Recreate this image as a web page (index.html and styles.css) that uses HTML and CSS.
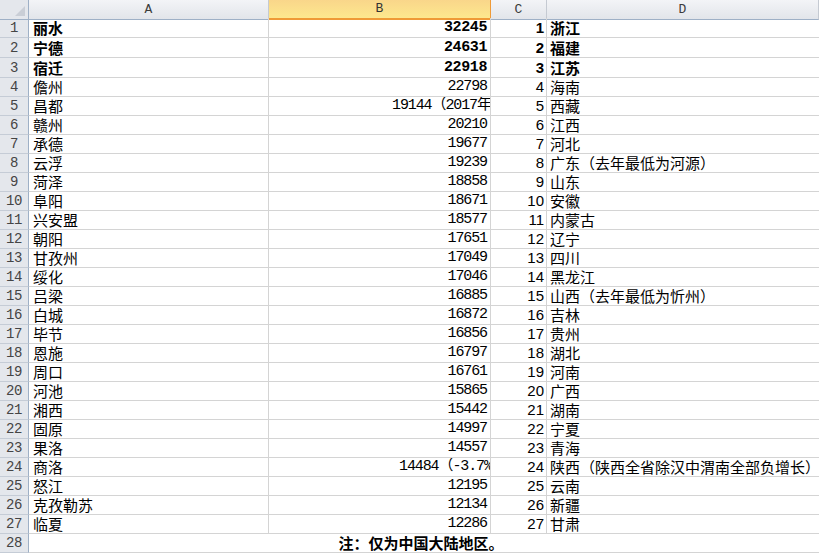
FILE: index.html
```html
<!DOCTYPE html>
<html>
<head>
<meta charset="utf-8">
<link rel="stylesheet" href="styles.css">
</head>
<body>
<div class="sheet">
  <div class="row head">
    <div class="corner"><span class="tri"></span></div>
    <div class="ch">A</div>
    <div class="ch sel">B</div>
    <div class="ch">C</div>
    <div class="ch">D</div>
  </div>
  <div class="row b"><div class="rh">1</div><div class="a">丽水</div><div class="n">32245</div><div class="r">1</div><div class="d">浙江</div></div>
  <div class="row b"><div class="rh">2</div><div class="a">宁德</div><div class="n">24631</div><div class="r">2</div><div class="d">福建</div></div>
  <div class="row b"><div class="rh">3</div><div class="a">宿迁</div><div class="n">22918</div><div class="r">3</div><div class="d">江苏</div></div>
  <div class="row"><div class="rh">4</div><div class="a">儋州</div><div class="n">22798</div><div class="r">4</div><div class="d">海南</div></div>
  <div class="row"><div class="rh">5</div><div class="a">昌都</div><div class="n clip c1"><span>19144（2017年</span></div><div class="r">5</div><div class="d">西藏</div></div>
  <div class="row"><div class="rh">6</div><div class="a">赣州</div><div class="n">20210</div><div class="r">6</div><div class="d">江西</div></div>
  <div class="row"><div class="rh">7</div><div class="a">承德</div><div class="n">19677</div><div class="r">7</div><div class="d">河北</div></div>
  <div class="row"><div class="rh">8</div><div class="a">云浮</div><div class="n">19239</div><div class="r">8</div><div class="d">广东（去年最低为河源）</div></div>
  <div class="row"><div class="rh">9</div><div class="a">菏泽</div><div class="n">18858</div><div class="r">9</div><div class="d">山东</div></div>
  <div class="row"><div class="rh">10</div><div class="a">阜阳</div><div class="n">18671</div><div class="r">10</div><div class="d">安徽</div></div>
  <div class="row"><div class="rh">11</div><div class="a">兴安盟</div><div class="n">18577</div><div class="r">11</div><div class="d">内蒙古</div></div>
  <div class="row"><div class="rh">12</div><div class="a">朝阳</div><div class="n">17651</div><div class="r">12</div><div class="d">辽宁</div></div>
  <div class="row"><div class="rh">13</div><div class="a">甘孜州</div><div class="n">17049</div><div class="r">13</div><div class="d">四川</div></div>
  <div class="row"><div class="rh">14</div><div class="a">绥化</div><div class="n">17046</div><div class="r">14</div><div class="d">黑龙江</div></div>
  <div class="row"><div class="rh">15</div><div class="a">吕梁</div><div class="n">16885</div><div class="r">15</div><div class="d">山西（去年最低为忻州）</div></div>
  <div class="row"><div class="rh">16</div><div class="a">白城</div><div class="n">16872</div><div class="r">16</div><div class="d">吉林</div></div>
  <div class="row"><div class="rh">17</div><div class="a">毕节</div><div class="n">16856</div><div class="r">17</div><div class="d">贵州</div></div>
  <div class="row"><div class="rh">18</div><div class="a">恩施</div><div class="n">16797</div><div class="r">18</div><div class="d">湖北</div></div>
  <div class="row"><div class="rh">19</div><div class="a">周口</div><div class="n">16761</div><div class="r">19</div><div class="d">河南</div></div>
  <div class="row"><div class="rh">20</div><div class="a">河池</div><div class="n">15865</div><div class="r">20</div><div class="d">广西</div></div>
  <div class="row"><div class="rh">21</div><div class="a">湘西</div><div class="n">15442</div><div class="r">21</div><div class="d">湖南</div></div>
  <div class="row"><div class="rh">22</div><div class="a">固原</div><div class="n">14997</div><div class="r">22</div><div class="d">宁夏</div></div>
  <div class="row"><div class="rh">23</div><div class="a">果洛</div><div class="n">14557</div><div class="r">23</div><div class="d">青海</div></div>
  <div class="row"><div class="rh">24</div><div class="a">商洛</div><div class="n clip c2"><span>14484（-3.7%</span></div><div class="r">24</div><div class="d">陕西（陕西全省除汉中渭南全部负增长）</div></div>
  <div class="row"><div class="rh">25</div><div class="a">怒江</div><div class="n">12195</div><div class="r">25</div><div class="d">云南</div></div>
  <div class="row"><div class="rh">26</div><div class="a">克孜勒苏</div><div class="n">12134</div><div class="r">26</div><div class="d">新疆</div></div>
  <div class="row"><div class="rh">27</div><div class="a">临夏</div><div class="n">12286</div><div class="r">27</div><div class="d">甘肃</div></div>
  <div class="row"><div class="rh">28</div><div class="merged">注：仅为中国大陆地区。</div></div>
  <div class="row"><div class="rh"></div><div class="a"></div><div class="n"></div><div class="r"></div><div class="d"></div></div>
</div>
</body>
</html>
```
FILE: styles.css
```css
* { box-sizing: border-box; }
html, body { margin: 0; padding: 0; background: #fff; overflow: hidden; }
body { font-family: "Noto Sans CJK SC", "Liberation Sans", sans-serif; color: #000; }
.sheet { width: 819px; }
.row {
  display: grid;
  grid-template-columns: 29px 240px 222px 56px 1fr;
  height: 19px;
}
.row.b { height: 20px; }
.row > div {
  border-right: 1px solid #d4d4d4;
  border-bottom: 1px solid #d4d4d4;
  white-space: nowrap;
  display: flex;
  align-items: center;
  font-size: 15px;
  line-height: 18px;
}
.row > div.d { border-right: none; }
.row.head { height: 18px; }
.row.head > div {
  background: linear-gradient(#f3f4f7, #e2e5ea);
  border-right: 1px solid #c5cad2;
  border-bottom: 1px solid #9eb0c6;
  justify-content: center;
  font-family: "Liberation Mono", monospace;
  font-size: 13px;
  color: #3b3b3b;
}
.row.head > div.corner { background: #e4e7ec; position: relative; border-right-color: #9eb0c6; }
.tri {
  position: absolute;
  right: 3px;
  bottom: 3px;
  width: 0;
  height: 0;
  border-left: 10px solid transparent;
  border-bottom: 10px solid #c9ced6;
}
.row.head > div.sel {
  background: linear-gradient(#f9d68a, #fde88e);
  border-right: 1px solid #ef9a37;
  border-bottom: 2px solid #ef9a37;
  color: #333;
}
.row > div.rh {
  background: #e4e7ec;
  border-right: 1px solid #9eb0c6;
  border-bottom: 1px solid #c5ccd6;
  justify-content: center;
  font-family: "Liberation Mono", monospace;
  font-size: 14px;
  letter-spacing: -0.5px;
  color: #444;
}
.a { padding-left: 4px; }
.d { padding-left: 3px; }
.n {
  justify-content: flex-end;
  padding-right: 3px;
  font-family: "Liberation Mono", "Noto Sans CJK SC", monospace;
  letter-spacing: -1.1px;
  font-size: 14px;
}
.n.clip { justify-content: flex-start; padding-right: 0; overflow: hidden; }
.n.c1 { padding-left: 123px; }
.n.c2 { padding-left: 130px; }
.r {
  justify-content: flex-end;
  padding-right: 2px;
  font-family: "Liberation Sans", Arial, sans-serif;
}
.row.b > div { font-weight: bold; }
.row.b > div.n { font-size: 15px; letter-spacing: -0.4px; }
.row.b > div.rh { font-weight: normal; }
.merged {
  grid-column: 2 / 6;
  justify-content: center;
  padding-right: 6px;
  font-weight: bold;
  border-right: none !important;
}
```
